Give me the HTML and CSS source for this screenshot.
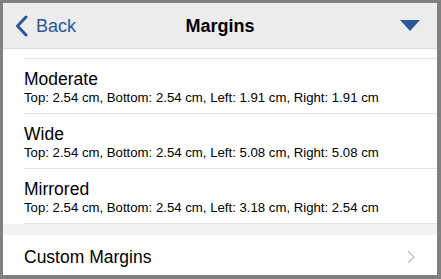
FILE: index.html
```html
<!DOCTYPE html>
<html>
<head>
<meta charset="utf-8">
<link rel="stylesheet" href="styles.css">
</head>
<body>
<div class="frame">
  <header class="nav">
    <div class="back">
      <svg class="back-chevron" width="13" height="22" viewBox="0 0 13 22"><path d="M11 2 L2.5 11 L11 20" fill="none" stroke="#2b579a" stroke-width="3" stroke-linecap="round" stroke-linejoin="round"/></svg>
      <span class="back-label">Back</span>
    </div>
    <div class="title">Margins</div>
    <div class="menu">
      <svg width="20" height="11" viewBox="0 0 20 11"><path d="M0 0 H20 L10 11 Z" fill="#2b579a"/></svg>
    </div>
  </header>
  <div class="list">
    <div class="row-cut"></div>
    <div class="row">
      <div class="row-title">Moderate</div>
      <div class="row-sub">Top: 2.54 cm, Bottom: 2.54 cm, Left: 1.91 cm, Right: 1.91 cm</div>
    </div>
    <div class="row">
      <div class="row-title">Wide</div>
      <div class="row-sub">Top: 2.54 cm, Bottom: 2.54 cm, Left: 5.08 cm, Right: 5.08 cm</div>
    </div>
    <div class="row">
      <div class="row-title">Mirrored</div>
      <div class="row-sub">Top: 2.54 cm, Bottom: 2.54 cm, Left: 3.18 cm, Right: 2.54 cm</div>
    </div>
    <div class="gap"></div>
    <div class="custom">
      <span>Custom Margins</span>
      <svg width="8" height="14" viewBox="0 0 8 14"><path d="M1 1 L7 7 L1 13" fill="none" stroke="#c7c7cc" stroke-width="1.6"/></svg>
    </div>
  </div>
</div>
</body>
</html>
```
FILE: styles.css
```css
html, body {
  margin: 0;
  padding: 0;
}
body {
  width: 441px;
  height: 279px;
  background: #808080;
  font-family: "Liberation Sans", Arial, sans-serif;
  color: #000;
  overflow: hidden;
}
.frame {
  box-sizing: border-box;
  width: 441px;
  height: 279px;
  border-style: solid;
  border-color: #808080;
  border-width: 3px 4px 4px 3px;
  background: #fff;
  display: flex;
  flex-direction: column;
  overflow: hidden;
}
.nav {
  flex: 0 0 auto;
  height: 45px;
  background: #ebeceb;
  border-bottom: 1px solid #dadada;
  display: grid;
  grid-template-columns: 1fr auto 1fr;
  align-items: center;
}
.back {
  display: flex;
  align-items: center;
  padding-left: 12px;
  color: #2b579a;
  font-size: 18px;
  line-height: 24px;
}
.back-chevron {
  flex: 0 0 auto;
  margin-right: 8px;
  margin-top: 1px;
}
.back-label {
  white-space: nowrap;
}
.title {
  font-weight: bold;
  font-size: 18px;
  line-height: 24px;
}
.menu {
  display: flex;
  justify-content: flex-end;
  padding-right: 17px;
}
.list {
  flex: 1 1 auto;
  display: flex;
  flex-direction: column;
  overflow: hidden;
}
.row-cut {
  flex: 0 0 auto;
  height: 9px;
  margin-left: 21px;
  border-bottom: 1px solid #e3e3e3;
}
.row {
  flex: 0 0 auto;
  height: 37px;
  margin-left: 21px;
  padding: 10px 0 7px;
  border-bottom: 1px solid #e3e3e3;
}
.row-title {
  font-size: 17.5px;
  line-height: 20px;
}
.row-sub {
  font-size: 13.2px;
  line-height: 17px;
  white-space: nowrap;
}
.gap {
  height: 11px;
  background: #f2f2f2;
  flex: 0 0 auto;
}
.custom {
  flex: 1 1 auto;
  display: flex;
  align-items: center;
  justify-content: space-between;
  padding: 3px 22px 0 21px;
  font-size: 17.5px;
  line-height: 22px;
}
```
